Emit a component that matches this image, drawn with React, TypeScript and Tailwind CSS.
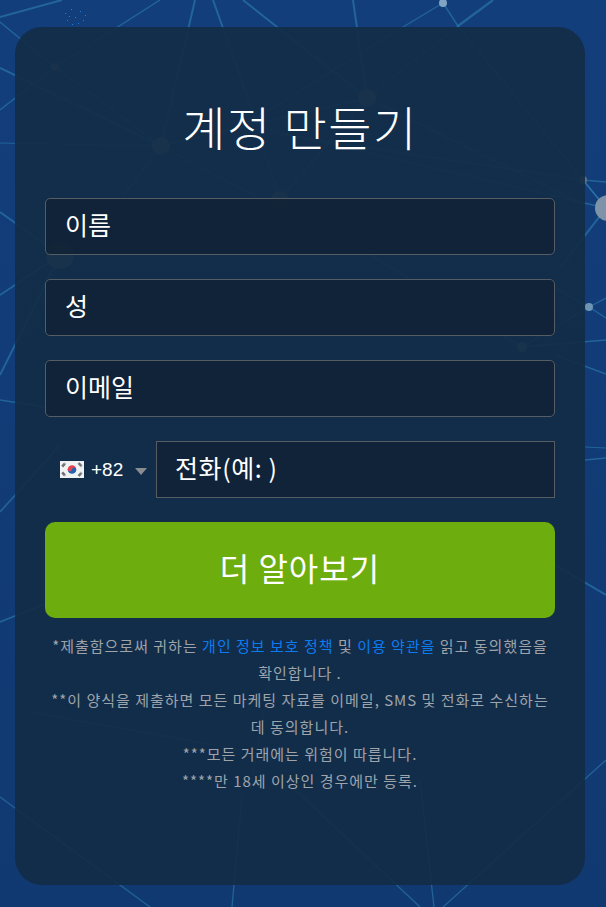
const lines: [number, number, number, number, number?][] = [
  [0, 17, 62, 0, 2],
  [0, 22, 55, 67],
  [0, 68, 161, 146, 2],
  [0, 110, 55, 67],
  [160, 0, 55, 67],
  [55, 67, 161, 146],
  [195, 0, 161, 146, 2],
  [213, 0, 252, 110, 2],
  [252, 110, 280, 200],
  [243, 0, 367, 98, 2],
  [353, 0, 367, 98, 2],
  [161, 146, 367, 98],
  [161, 146, 0, 143, 1.2],
  [161, 146, 290, 215],
  [161, 146, 120, 200],
  [367, 98, 280, 200],
  [367, 98, 458, 26],
  [403, 27, 443, 3, 1.4],
  [403, 27, 250, 122],
  [443, 3, 458, 26, 1.4],
  [458, 26, 493, 0, 2.2],
  [458, 26, 606, 208],
  [367, 98, 585, 205],
  [250, 130, 583, 180],
  [270, 130, 606, 208],
  [583, 180, 606, 182, 1.6],
  [583, 180, 606, 208, 1.6],
  [606, 208, 560, 268, 2],
  [0, 212, 60, 255, 2],
  [0, 295, 60, 255, 1.6],
  [0, 375, 60, 255, 2],
  [0, 400, 45, 407, 1.4],
  [0, 512, 60, 445, 1.6],
  [0, 622, 60, 598, 1.8],
  [60, 255, 280, 200],
  [280, 200, 522, 347],
  [522, 347, 606, 340],
  [522, 347, 589, 307],
  [589, 307, 606, 298, 1.4],
  [589, 307, 606, 318, 1.4],
  [589, 307, 550, 285],
  [555, 355, 606, 374, 1.6],
  [585, 447, 606, 448, 1.2],
  [585, 460, 606, 458, 1.4],
  [555, 565, 606, 595, 2],
  [0, 797, 150, 907, 1.3],
  [242, 795, 232, 907, 1.3],
  [285, 780, 420, 907, 1.3],
  [420, 780, 434, 907, 1.3],
  [606, 760, 443, 907, 1.3],
  [30, 712, 270, 755, 1],
  [250, 790, 270, 680, 1],
];

const nodes: [number, number, number, string][] = [
  [161, 146, 9, "#5d7288"],
  [55, 67, 4, "#5d7288"],
  [367, 98, 9, "#5d7288"],
  [280, 200, 9, "#5d7288"],
  [60, 255, 14, "#5d7288"],
  [608, 208, 13, "#7f93a8"],
  [583, 180, 4, "#5d7288"],
  [443, 3, 4, "#7fa4c4"],
  [522, 347, 5, "#5d7288"],
  [589, 307, 4, "#6d94b5"],
];

const dots: [number, number][] = [
  [65, 13], [71, 9], [75, 17], [80, 11], [67, 20], [72, 24], [83, 20], [85, 15], [78, 23], [69, 16],
];

function Field({ placeholder }: { placeholder: string }) {
  return (
    <input
      placeholder={placeholder}
      className="h-[57px] w-full rounded-[5px] border border-[#565c63] bg-[#112236]/90 pb-[5px] pl-[19px] text-[25px] text-white outline-none placeholder:text-white"
    />
  );
}

function KoreaFlag() {
  return (
    <svg width="24" height="17" viewBox="0 0 24 17" className="shrink-0">
      <rect width="24" height="17" fill="#f1f2f3" />
      <path d="M7.7 8.5a4.3 4.3 0 0 1 8.6 0z" fill="#e5424f" />
      <path d="M7.7 8.5a4.3 4.3 0 0 0 8.6 0z" fill="#2463ae" />
      <circle cx="9.9" cy="8.3" r="2.15" fill="#e5424f" />
      <circle cx="14.1" cy="8.7" r="2.15" fill="#2463ae" />
      <g stroke="#6f7276" strokeWidth="2.6" strokeDasharray="4 .5">
        <path d="M2.2 5.6 5.4 2" />
        <path d="M18.6 2 21.8 5.6" />
        <path d="M2.2 11.4 5.4 15" />
        <path d="M18.6 15 21.8 11.4" />
      </g>
    </svg>
  );
}

export default function App() {
  return (
    <div
      className="relative min-h-[907px] overflow-hidden bg-gradient-to-b from-[#123e7b] to-[#113971] px-[15px] pb-[22px] pr-[21px] pt-[27px] text-white"
      style={{ fontFamily: '"Noto Sans CJK KR", "Liberation Sans", Arial, sans-serif' }}
    >
      <svg className="absolute inset-0" width="606" height="907" viewBox="0 0 606 907" aria-hidden="true">
        {lines.map(([x1, y1, x2, y2, w], i) => (
          <line key={i} x1={x1} y1={y1} x2={x2} y2={y2} stroke="#2d7fb0" strokeOpacity="0.6" strokeWidth={w ?? 1.4} />
        ))}
        {nodes.map(([cx, cy, r, fill], i) => (
          <circle key={i} cx={cx} cy={cy} r={r} fill={fill} />
        ))}
        {dots.map(([x, y], i) => (
          <rect key={i} x={x} y={y} width="1" height="1" fill="#1f7fe0" />
        ))}
      </svg>

      <main className="relative h-[858px] w-[570px] rounded-[27px] bg-[#122c46]/92 px-[30px]">
        <h1 className="pt-[68px] text-center text-[47px] font-light leading-[62px] tracking-[1.5px] text-white">계정 만들기</h1>

        <form className="mt-[41px] flex flex-col">
          <div className="flex flex-col gap-[24px]">
            <Field placeholder="이름" />
            <Field placeholder="성" />
            <Field placeholder="이메일" />
          </div>

          <div className="mt-[24px] flex h-[57px] items-center">
            <div className="flex w-[111px] shrink-0 items-center pl-[15px]">
              <KoreaFlag />
              <span className="ml-[7px] text-[19px] leading-none" style={{ fontFamily: '"Liberation Sans", Arial, sans-serif' }}>
                +82
              </span>
              <span className="ml-[12px] mt-[4px] h-0 w-0 border-x-[6px] border-t-[7px] border-x-transparent border-t-[#8a8d90]" />
            </div>
            <input
              placeholder="전화(예: )"
              className="h-[57px] min-w-0 flex-1 border border-[#565c63] bg-[#112236]/90 pb-[5px] pl-[18px] text-[25px] tracking-[0.6px] text-white outline-none placeholder:text-white"
            />
          </div>

          <button type="button" className="mt-[24px] h-[96px] w-full rounded-[10px] bg-[#6dad0d] pb-[7px] text-[32px] tracking-[1px] text-white">
            더 알아보기
          </button>
        </form>

        <div className="mx-auto mt-[14px] text-center text-[15px] leading-[27px] tracking-[1px] text-[#9ea4aa]">
          <p>
            *제출함으로써 귀하는 <a className="text-[#0d7bf0]">개인 정보 보호 정책</a> 및{" "}
            <a className="text-[#0d7bf0]">이용 약관을</a> 읽고 동의했음을 확인합니다 .
          </p>
          <p>**이 양식을 제출하면 모든 마케팅 자료를 이메일, SMS 및 전화로 수신하는 데 동의합니다.</p>
          <p>***모든 거래에는 위험이 따릅니다.</p>
          <p>****만 18세 이상인 경우에만 등록.</p>
        </div>
      </main>
    </div>
  );
}
